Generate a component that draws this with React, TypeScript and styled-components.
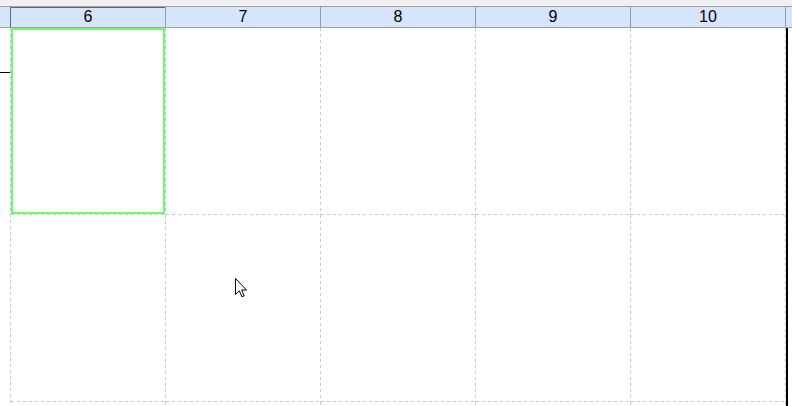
import React from "react"
import styled, {createGlobalStyle} from "styled-components"

const GlobalStyle = createGlobalStyle`
  html, body {
    margin: 0;
    padding: 0;
    background: #ffffff;
    overflow: hidden;
  }
  body {
    font-family: "Liberation Sans", Arial, sans-serif;
  }
`

const dash = "#c8c8c8"

const Page = styled.div`
  position: relative;
  width: 792px;
  height: 406px;
  display: flex;
  flex-direction: column;
  background: #fff;
`

const TopStrip = styled.div`
  height: 6px;
  background: #f0f0f0;
`

const HeaderRow = styled.div`
  display: flex;
  height: 20px;
  border-top: 1px solid #a0a0a0;
  border-bottom: 1px solid #a0a0a0;
  background: #d6e4fc;
`

const Corner = styled.div`
  width: 10px;
  flex: none;
`

const HeaderCell = styled.div<{selected?: boolean}>`
  width: 154px;
  flex: none;
  border-left: 1px solid #9a9a9a;
  display: flex;
  align-items: center;
  justify-content: center;
  font-size: 16px;
  line-height: 20px;
  color: #000;
  ${(props) =>
    props.selected
      ? `box-shadow: inset 0 1px 0 #6a6a6a; border-left-color: #6a6a6a;`
      : ``}
`

const HeaderFiller = styled.div`
  flex: 1;
  border-left: 1px solid #9a9a9a;
`

const Body = styled.div`
  flex: 1;
  display: flex;
  overflow: hidden;
`

const RowHeader = styled.div`
  width: 10px;
  flex: none;
  display: flex;
  flex-direction: column;
`

const RowMark = styled.div`
  margin-top: 44px;
  height: 1px;
  background: #000;
`

const Grid = styled.div`
  display: grid;
  grid-template-columns: repeat(5, 155px);
  grid-auto-rows: 187px;
  padding-left: 1px;
  align-self: flex-start;
  background-image: repeating-linear-gradient(to bottom, ${dash} 0 3px, transparent 3px 6px);
  background-size: 1px 100%;
  background-position: left top;
  background-repeat: no-repeat;
`

const Cell = styled.div<{selected?: boolean}>`
  position: relative;
  background-image:
    repeating-linear-gradient(to bottom, ${dash} 0 3px, transparent 3px 6px),
    repeating-linear-gradient(to right, ${dash} 0 3px, transparent 3px 6px);
  background-size: 1px 100%, 100% 1px;
  background-position: right top, left bottom;
  background-repeat: no-repeat;

  &::after {
    content: "";
    display: ${(props) => (props.selected ? "block" : "none")};
    position: absolute;
    top: 0;
    left: 0;
    right: 1px;
    bottom: 1px;
    border: 2px solid #66ff66;
  }
`

const EdgeBar = styled.div`
  width: 2px;
  flex: none;
  background: #000;
`

const Cursor = styled.svg`
  position: absolute;
  left: 235px;
  top: 278px;
  pointer-events: none;
`

const columns = ["6", "7", "8", "9", "10"]

export default function App() {
  const cells = []
  for (let r = 0; r < 3; r++) {
    for (let c = 0; c < 5; c++) {
      cells.push(<Cell key={`${r}-${c}`} selected={r === 0 && c === 0} />)
    }
  }

  return (
    <Page>
      <GlobalStyle />
      <TopStrip />
      <HeaderRow>
        <Corner />
        {columns.map((label, i) => (
          <HeaderCell key={label} selected={i === 0}>
            {label}
          </HeaderCell>
        ))}
        <HeaderFiller />
      </HeaderRow>
      <Body>
        <RowHeader>
          <RowMark />
        </RowHeader>
        <Grid>{cells}</Grid>
        <EdgeBar />
      </Body>
      <Cursor width="14" height="20" viewBox="0 0 14 20">
        <path
          d="M0.5 0.5 L0.5 16.5 L4.3 12.8 L7 18.8 L9.2 17.8 L6.6 12 L11.5 12 Z"
          fill="#fff"
          stroke="#000"
          strokeWidth="1"
          strokeLinejoin="miter"
        />
      </Cursor>
    </Page>
  )
}
